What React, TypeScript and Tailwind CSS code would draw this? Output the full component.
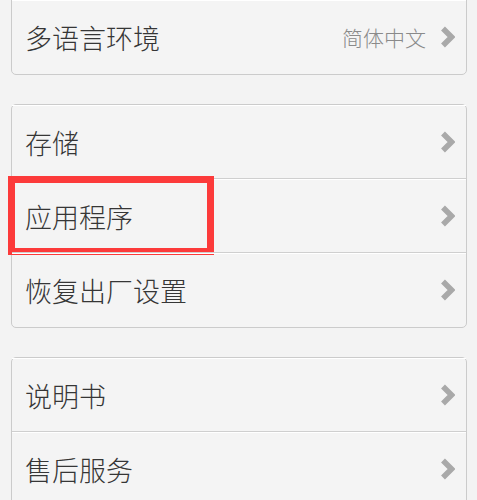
import React from "react";

const font = { fontFamily: '"Noto Sans CJK SC", "Noto Sans", sans-serif' };

function Chevron() {
  return (
    <svg width="15" height="22" viewBox="0 0 15 22" className="shrink-0">
      <polyline points="3,2.5 11.5,11 3,19.5" fill="none" stroke="#a9a9a9" strokeWidth="5.5" strokeLinejoin="miter" strokeLinecap="butt" />
    </svg>
  );
}

type Item = { label: string; value?: string; marked?: boolean };

function Row({ item, first }: { item: Item; first: boolean }) {
  return (
    <div className={`relative ${first ? "" : "border-t border-[#cfcfcf]"}`}>
      <div className="h-[73px] border-t border-white flex items-center pl-[13px] pr-[11px]">
        <span className="flex-1 text-[27px] font-light text-[#363636] leading-none">{item.label}</span>
        {item.value && <span className="text-[21px] font-light text-[#8a8a8a] leading-none mr-[14px]">{item.value}</span>}
        <Chevron />
      </div>
      {item.marked && (
        <div className="absolute -top-[3px] -left-[4px] w-[206px] h-[79px] border-[7px] border-[#fc3a3a] pointer-events-none" />
      )}
    </div>
  );
}

function Card({ items, className }: { items: Item[]; className?: string }) {
  return (
    <div className={`ml-[11px] mr-[10px] pb-px rounded-[5px] border border-[#cbcbcb] bg-[#f4f4f4] ${className ?? ""}`}>
      {items.map((item, i) => (
        <Row key={item.label} item={item} first={i === 0} />
      ))}
    </div>
  );
}

export default function App() {
  return (
    <div className="w-[477px] h-[500px] overflow-hidden bg-[#f3f3f3]" style={font}>
      <Card className="-mt-[1px] rounded-t-none" items={[{ label: "多语言环境", value: "简体中文" }]} />
      <Card className="mt-[29px]" items={[{ label: "存储" }, { label: "应用程序", marked: true }, { label: "恢复出厂设置" }]} />
      <Card className="mt-[29px]" items={[{ label: "说明书" }, { label: "售后服务" }]} />
    </div>
  );
}
